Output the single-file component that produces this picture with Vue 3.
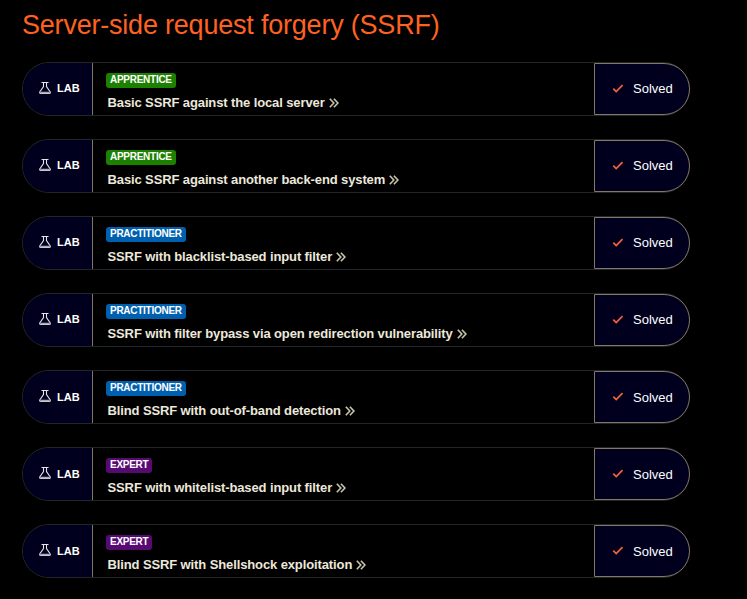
<script setup>
const labs = [
  { level: 'Apprentice', title: 'Basic SSRF against the local server' },
  { level: 'Apprentice', title: 'Basic SSRF against another back-end system' },
  { level: 'Practitioner', title: 'SSRF with blacklist-based input filter' },
  { level: 'Practitioner', title: 'SSRF with filter bypass via open redirection vulnerability' },
  { level: 'Practitioner', title: 'Blind SSRF with out-of-band detection' },
  { level: 'Expert', title: 'SSRF with whitelist-based input filter' },
  { level: 'Expert', title: 'Blind SSRF with Shellshock exploitation' },
]
</script>

<template>
  <main class="page">
    <h1>Server-side request forgery (SSRF)</h1>
    <ul class="labs">
      <li v-for="lab in labs" :key="lab.title" class="lab">
        <div class="kind">
          <svg class="flask" width="12" height="12" viewBox="0 0 12 12">
            <path d="M2.5 0.5H9.5M4.5 0.5V4.5L0.9 9.8Q0.3 11.4 1.6 11.4H10.4Q11.7 11.4 11.1 9.8L7.5 4.5V0.5" fill="none" stroke="#e4e4ea" stroke-width="1.1" />
            <path d="M1.8 9.8H10.2L10.8 11.4H1.2Z" fill="#a9a9b8" />
          </svg>
          <span class="label">LAB</span>
        </div>
        <div class="info">
          <span class="badge" :class="lab.level.toLowerCase()">{{ lab.level.toUpperCase() }}</span>
          <a class="title">{{ lab.title }}<svg class="more" width="10" height="10" viewBox="0 0 10 10"><path d="M0.8 0.8L4.8 5L0.8 9.2M4.9 0.8L8.9 5L4.9 9.2" fill="none" stroke="#c9c4ac" stroke-width="1.6" /></svg></a>
        </div>
        <div class="status">
          <svg width="12" height="10" viewBox="0 0 12 10"><path d="M1.3 4.7L4.2 7.6L10.5 1.2" fill="none" stroke="#f8623c" stroke-width="1.7" /></svg>
          <span class="label">Solved</span>
        </div>
      </li>
    </ul>
  </main>
</template>

<style>
body { background: #000; }
</style>

<style scoped>
.page {
  box-sizing: border-box;
  width: 747px;
  height: 599px;
  padding: 9px 57px 0 22px;
  overflow: hidden;
  background: #000;
  font-family: "Liberation Sans", Arial, sans-serif;
}
h1 {
  margin: 0;
  height: 53px;
  font-size: 27px;
  line-height: 33px;
  font-weight: 400;
  letter-spacing: -0.21px;
  color: #ff6220;
  white-space: nowrap;
}
.labs {
  display: flex;
  flex-direction: column;
  gap: 23px;
  margin: 0;
  padding: 0;
  list-style: none;
}
.lab {
  box-sizing: border-box;
  display: flex;
  height: 54px;
  border: 1px solid #20262a;
  border-right: 0;
  border-radius: 27px;
}
.kind {
  box-sizing: border-box;
  display: flex;
  align-items: center;
  width: 70px;
  padding-left: 16px;
  gap: 6px;
  border-right: 1px solid #857862;
  border-radius: 26px 0 0 26px;
  background: #00001e;
  color: #fff;
  font-size: 11px;
  font-weight: 700;
}
.flask { margin-top: -2px; }
.label { padding-bottom: 2px; }
.lab:nth-child(n+5) .label { padding-bottom: 0; }
.info {
  flex: 1;
  display: flex;
  flex-direction: column;
  align-items: flex-start;
  padding: 10px 0 0 13px;
}
.badge {
  box-sizing: border-box;
  height: 15px;
  padding: 0 4px;
  border-radius: 3px;
  color: #fff;
  font-size: 10px;
  line-height: 14px;
  font-weight: 700;
  letter-spacing: -0.27px;
}
.apprentice { background: #1c8000; }
.practitioner { background: #0060b0; }
.expert { background: #570b72; }
.title {
  margin: 6px 0 0 1.5px;
  color: #ece8dc;
  font-size: 13px;
  line-height: 18px;
  font-weight: 700;
  letter-spacing: -0.115px;
  white-space: nowrap;
}
.more { margin-left: 4px; vertical-align: -1px; }
.status {
  box-sizing: border-box;
  display: flex;
  align-items: center;
  width: 96px;
  height: 52px;
  padding-left: 17px;
  gap: 9px;
  border: 1px solid #857862;
  border-radius: 0 26px 26px 0;
  background: #00001e;
  color: #fff;
  font-size: 13px;
}
</style>
